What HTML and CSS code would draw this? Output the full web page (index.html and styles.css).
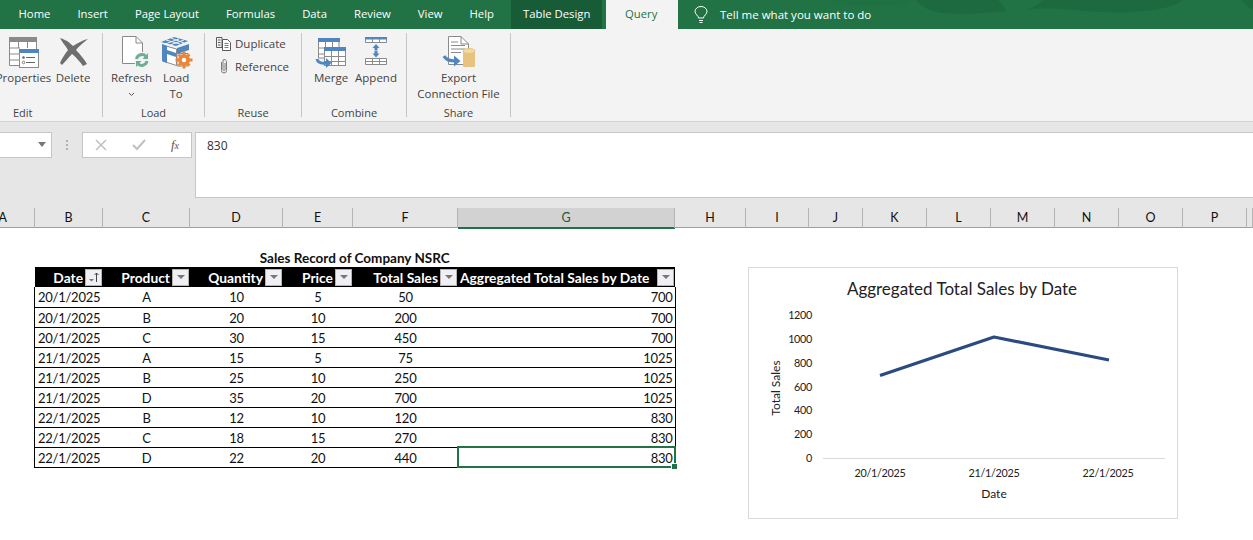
FILE: index.html
```html
<!DOCTYPE html>
<html lang="en">
<head>
    <meta charset="UTF-8">
    <title>Sales Record - Excel</title>
    <link rel="stylesheet" href="styles.css">
</head>
<body>
    <div class="app">
        <div class="tabs">
            <svg class="leaves" width="460" height="29" viewBox="0 0 460 29"><path fill="#1f7043" d="M40 0 C50 6 80 8 115 4 L118 0Z"/><path fill="#1e6a40" d="M123 0 C130 10 145 15 175 14 C190 14 200 11 213 12 C212 6 208 3 205 0Z"/><path fill="#1e6a40" d="M234 10 C260 5 300 15 340 12 C370 10 385 5 390 0 H250 C245 4 240 7 234 10Z"/><path fill="#1e6a40" d="M449 0 H460 V10 C455 8 452 4 449 0Z"/></svg>
            <div class="tab-list">
                <div class="tab">Home</div>
                <div class="tab">Insert</div>
                <div class="tab">Page Layout</div>
                <div class="tab">Formulas</div>
                <div class="tab">Data</div>
                <div class="tab">Review</div>
                <div class="tab">View</div>
                <div class="tab">Help</div>
            </div>
            <div class="tab tab-context">Table Design</div>
            <div class="tab tab-active">Query</div>
            <div class="tell">
                <svg width="14" height="18" viewBox="0 0 14 18" fill="none" stroke="#fff" stroke-width="1"><path d="M4.5 12 C4.5 9.5 1 8.5 1 5.5 A6 5 0 0 1 13 5.5 C13 8.5 9.5 9.5 9.5 12Z"/><path d="M5 14.5H9M5.5 16.5H8.5"/></svg>
                <span>Tell me what you want to do</span>
            </div>
        </div>

        <div class="ribbon">
            <div class="group group-edit">
                <div class="items">
                    <div class="btn">
                        <svg class="icon" width="32" height="32" viewBox="0 0 32 32">
                            <path fill="#fff" stroke="#8a8a8a" d="M1.5 1.5H28.5V29.5H1.5Z"/>
                            <rect x="1" y="1" width="28" height="5" fill="#8a8a8a"/>
                            <path stroke="#8a8a8a" fill="none" d="M1 12H12M1 18H12M1 24H12M10.500 6V12M19.500 6V12"/>
                            <rect x="11.500" y="13.500" width="19" height="18" fill="#fff" stroke="#8a8a8a"/>
                            <rect x="11" y="13" width="20" height="4" fill="#4f86c0"/>
                            <circle cx="15.500" cy="21.500" r="1.300" fill="#666"/>
                            <circle cx="15.500" cy="26.500" r="1.300" fill="none" stroke="#666" stroke-width="0.800"/>
                            <path stroke="#666" d="M18 21.500H27M18 26.500H27"/>
                        </svg>
                        <span class="lbl">Properties</span>
                    </div>
                    <div class="btn">
                        <svg class="icon" width="32" height="32" viewBox="0 0 32 32">
                            <path fill="#6e6e6e" d="M3 2 C6 3 10 4 16 10 C21 7 26 4 31 3 C27 6 22 10 19 14 C23 18 27 23 30 28 L26 30 C23 26 19 21 15 18 C11 22 8 26 5 29 L3 27 C5 22 8 18 11 14 C8 9 5 6 3 2Z"/>
                        </svg>
                        <span class="lbl">Delete</span>
                    </div>
                </div>
                <div class="group-name">Edit</div>
            </div>

            <div class="group group-load">
                <div class="items">
                    <div class="btn">
                        <svg class="icon" width="32" height="32" viewBox="0 0 32 32">
                            <path fill="#fff" stroke="#8a8a8a" d="M6.500 0.500H20L26.500 7V27.500H6.500Z"/>
                            <path fill="none" stroke="#8a8a8a" d="M20 0.500V7H26.500"/>
                            <circle cx="26" cy="24" r="8" fill="#f3f3f3"/>
                            <path fill="none" stroke="#6fae94" stroke-width="3" d="M20.500 23 A5.500 5.500 0 0 1 30 20.500M31 25 A5.500 5.500 0 0 1 21.500 27.500"/>
                            <path fill="#6fae94" d="M32 17V23H26.500ZM20 31V25H25.500Z"/>
                        </svg>
                        <span class="lbl">Refresh</span>
                        <svg class="chev" width="7" height="5" viewBox="0 0 7 5" fill="none" stroke="#555"><path d="M1 1L3.500 3.500L6 1"/></svg>
                    </div>
                    <div class="btn">
                        <svg class="icon" width="32" height="32" viewBox="0 0 32 32">
                            <path fill="#4f86c0" d="M1 6L14 1L28 5L16 10Z"/>
                            <path stroke="#f3f3f3" d="M6 4L20 8M11 2L24 7M5 8L19 3M10 9L24 4"/>
                            <path fill="#fff" stroke="#8a8a8a" d="M2.500 9L16.500 13V29.500L2.500 25Z"/>
                            <path fill="#4f86c0" d="M2 8L7 10V27L2 25ZM7 14V18L16 21V17Z"/>
                            <path fill="#4f86c0" d="M17 12L29 8V14L17 18Z"/>
                            <path fill="#fff" stroke="#8a8a8a" d="M17 17.500H28V30H17Z"/>
                            <g fill="#e8863a">
                                <circle cx="24" cy="24" r="6"/>
                                <path d="M22.500 15.500H25.500V20H22.500ZM22.500 28H25.500V32.500H22.500ZM15.500 22.500H20V25.500H15.500ZM28 22.500H32.500V25.500H28ZM17.500 19.500L19.500 17.500L22 20L20 22ZM26 28L28 26L30.500 28.500L28.500 30.500ZM19.500 30.500L17.500 28.500L20 26L22 28ZM28 22L26 20L28.500 17.500L30.500 19.500Z"/>
                            </g>
                            <circle cx="24" cy="24" r="2.200" fill="#fff"/>
                        </svg>
                        <span class="lbl">Load<br>To</span>
                    </div>
                </div>
                <div class="group-name">Load</div>
            </div>

            <div class="group group-reuse">
                <div class="small-items">
                    <div class="small-btn">
                        <svg width="17" height="15" viewBox="0 0 17 15" fill="none" stroke="#5a5a5a">
                            <path d="M1.500 1.500H7V11.500H1.500ZM3 4H5.500M3 6.500H5.500M3 9H5.500"/>
                            <path fill="#fff" d="M7.500 3.500H12.500L15.500 6.500V14.500H7.500Z"/>
                            <path stroke="#4f86c0" d="M9.500 7.500H13.500M9.500 9.500H13.500M9.500 11.500H13.500"/>
                        </svg>
                        <span>Duplicate</span>
                    </div>
                    <div class="small-btn">
                        <svg width="17" height="17" viewBox="0 0 17 17" fill="none" stroke="#7a7a7a">
                            <path d="M6.500 4V12.500A2.500 2.500 0 0 0 11.500 12.500V3.500A2.200 2.200 0 0 0 8 2V11.500A1 1 0 0 0 10 11.500V5"/>
                        </svg>
                        <span>Reference</span>
                    </div>
                </div>
                <div class="group-name">Reuse</div>
            </div>

            <div class="group group-combine">
                <div class="items">
                    <div class="btn">
                        <svg class="icon" width="32" height="32" viewBox="0 0 32 32">
                            <path fill="#fff" stroke="#8a8a8a" d="M3.500 2.500H24V22H3.500Z"/>
                            <rect x="3" y="2" width="22" height="4" fill="#4f86c0"/>
                            <path stroke="#8a8a8a" fill="none" d="M3 12H10M3 18H10M10.500 6V12M17.500 6V11"/>
                            <rect x="9.500" y="11.500" width="21" height="18" fill="#fff" stroke="#8a8a8a"/>
                            <rect x="9" y="11" width="22" height="4" fill="#4f86c0"/>
                            <path stroke="#8a8a8a" fill="none" d="M10 20.500H30M10 25.500H30M16.500 15V29M23.500 15V29"/>
                            <path fill="none" stroke="#4f86c0" stroke-width="3" d="M2 23 C3 27 6 28 12 27"/>
                            <path fill="#4f86c0" d="M11 22L16.500 27L11 32Z"/>
                        </svg>
                        <span class="lbl">Merge</span>
                    </div>
                    <div class="btn">
                        <svg class="icon" width="32" height="32" viewBox="0 0 32 32">
                            <path fill="#fff" stroke="#8a8a8a" d="M5.500 1.500H26.500V6.500H5.500ZM5.500 22.500H26.500V28.500H5.500Z"/>
                            <rect x="5" y="1" width="22" height="2.500" fill="#4f86c0"/>
                            <path stroke="#8a8a8a" d="M12.500 3V7M19.500 3V7M5 25.500H27M12.500 23V28M19.500 23V28"/>
                            <path fill="#4f86c0" d="M16 8L19.500 12H17.500V14.500H14.500V12H12.500ZM16 21.500L12.500 17.500H14.500V15H17.500V17.500H19.500Z"/>
                        </svg>
                        <span class="lbl">Append</span>
                    </div>
                </div>
                <div class="group-name">Combine</div>
            </div>

            <div class="group group-share">
                <div class="items">
                    <div class="btn">
                        <svg class="icon" width="32" height="32" viewBox="0 0 32 32">
                            <path fill="#fff" stroke="#8a8a8a" d="M5.500 0.500H18L25.500 8V28.500H5.500Z"/>
                            <path fill="none" stroke="#8a8a8a" d="M18 0.500V8H25.500M8 6H15M8 9.500H22M8 13H22M8 16.500H18"/>
                            <rect x="20" y="14" width="12" height="17" rx="1" fill="#e8c37f"/>
                            <ellipse cx="26" cy="15" rx="6" ry="2.500" fill="#f1d9a8" stroke="#e8c37f"/>
                            <path fill="none" stroke="#4f86c0" stroke-width="3.200" d="M1 20 C3 24 7 25 12 25"/>
                            <path fill="#4f86c0" d="M11 19.500L17.500 25L11 30.500Z"/>
                        </svg>
                        <span class="lbl">Export<br>Connection File</span>
                    </div>
                </div>
                <div class="group-name">Share</div>
            </div>
        </div>

        <div class="formula-bar">
            <div class="name-box"><span class="caret"></span></div>
            <div class="grip"></div>
            <div class="fx-buttons">
                <svg width="12" height="12" viewBox="0 0 12 12" stroke="#c0c0c0" stroke-width="1.500"><path d="M1 1L11 11M11 1L1 11"/></svg>
                <svg width="14" height="12" viewBox="0 0 14 12" fill="none" stroke="#c0c0c0" stroke-width="2"><path d="M1 6L5 10L13 1"/></svg>
                <span class="fx">f<small>x</small></span>
            </div>
            <div class="formula-input">830</div>
        </div>

        <div class="col-heads">
            <div class="ch ch-a">A</div>
            <div class="ch">B</div>
            <div class="ch">C</div>
            <div class="ch">D</div>
            <div class="ch">E</div>
            <div class="ch">F</div>
            <div class="ch ch-sel">G</div>
            <div class="ch">H</div>
            <div class="ch">I</div>
            <div class="ch">J</div>
            <div class="ch">K</div>
            <div class="ch">L</div>
            <div class="ch">M</div>
            <div class="ch">N</div>
            <div class="ch">O</div>
            <div class="ch">P</div>
            <div class="ch"></div>
        </div>

        <div class="sheet">
            <table class="sales">
                <caption>Sales Record of Company NSRC</caption>
                <colgroup>
                    <col class="c-date"><col class="c-prod"><col class="c-qty"><col class="c-price"><col class="c-total"><col class="c-agg">
                </colgroup>
                <thead>
                    <tr>
                        <th><div class="th-in"><span>Date</span><span class="filter sorted"><svg width="13" height="13" viewBox="0 0 13 13"><path fill="#777" d="M2 8H7L4.500 10.500Z"/><path fill="none" stroke="#444" d="M9.500 11V2M7.500 4L9.500 2L11.500 4"/></svg></span></div></th>
                        <th><div class="th-in"><span>Product</span><span class="filter"><i></i></span></div></th>
                        <th><div class="th-in"><span>Quantity</span><span class="filter"><i></i></span></div></th>
                        <th><div class="th-in"><span>Price</span><span class="filter"><i></i></span></div></th>
                        <th><div class="th-in"><span>Total Sales</span><span class="filter"><i></i></span></div></th>
                        <th><div class="th-in th-wide"><span>Aggregated Total Sales by Date</span><span class="filter"><i></i></span></div></th>
                    </tr>
                </thead>
                <tbody>
                    <tr><td class="left">20/1/2025</td><td>A</td><td>10</td><td>5</td><td>50</td><td class="right">700</td></tr>
                    <tr><td class="left">20/1/2025</td><td>B</td><td>20</td><td>10</td><td>200</td><td class="right">700</td></tr>
                    <tr><td class="left">20/1/2025</td><td>C</td><td>30</td><td>15</td><td>450</td><td class="right">700</td></tr>
                    <tr><td class="left">21/1/2025</td><td>A</td><td>15</td><td>5</td><td>75</td><td class="right">1025</td></tr>
                    <tr><td class="left">21/1/2025</td><td>B</td><td>25</td><td>10</td><td>250</td><td class="right">1025</td></tr>
                    <tr><td class="left">21/1/2025</td><td>D</td><td>35</td><td>20</td><td>700</td><td class="right">1025</td></tr>
                    <tr><td class="left">22/1/2025</td><td>B</td><td>12</td><td>10</td><td>120</td><td class="right">830</td></tr>
                    <tr><td class="left">22/1/2025</td><td>C</td><td>18</td><td>15</td><td>270</td><td class="right">830</td></tr>
                    <tr><td class="left">22/1/2025</td><td>D</td><td>22</td><td>20</td><td>440</td><td class="right selected">830<span class="handle"></span></td></tr>
                </tbody>
            </table>

            <div class="chart">
                <svg width="430" height="252" viewBox="0 0 430 252">
                    <text class="chart-title" x="214" y="28" text-anchor="middle">Aggregated Total Sales by Date</text>
                    <g class="chart-text" text-anchor="end">
                        <text x="64" y="52">1200</text>
                        <text x="64" y="76">1000</text>
                        <text x="64" y="100">800</text>
                        <text x="64" y="124">600</text>
                        <text x="64" y="147">400</text>
                        <text x="64" y="171">200</text>
                        <text x="64" y="195">0</text>
                    </g>
                    <path d="M75 191.500H417" stroke="#d9d9d9" fill="none"/>
                    <path d="M132 108.500L246 70L361 93" fill="none" stroke="#2a4a80" stroke-width="3.200" stroke-linejoin="round"/>
                    <g class="chart-text" text-anchor="middle">
                        <text x="132" y="210">20/1/2025</text>
                        <text x="246" y="210">21/1/2025</text>
                        <text x="360" y="210">22/1/2025</text>
                    </g>
                    <g class="chart-axis" text-anchor="middle">
                        <text x="246" y="231">Date</text>
                        <text transform="translate(32 121) rotate(-90)">Total Sales</text>
                    </g>
                </svg>
            </div>
        </div>
    </div>
</body>
</html>
```

FILE: styles.css
```css
*{
    margin: 0;
    padding: 0;
    box-sizing: border-box;
}
html,body{
    background-color: #fff;
}
.app{
    width: 1253px;
    height: 540px;
    overflow: hidden;
    font-family: "Open Sans", "Liberation Sans", sans-serif;
}

/* tabs */
.tabs{
    height: 29px;
    background-color: #217346;
    display: flex;
    padding-left: 5px;
    position: relative;
    color: #fff;
    font-size: 11.300px;
}
.leaves{
    position: absolute;
    left: 793px;
    top: 0;
}
.tab-list{
    width: 506px;
    flex: none;
    display: flex;
}
.tab{
    padding: 0 13.500px;
    line-height: 28px;
    position: relative;
    flex: none;
    white-space: nowrap;
}
.tab-context{
    background-color: #185c37;
    padding: 0 12px;
    width: 91px;
    margin-right: 4px;
}
.tab-active{
    background-color: #f3f3f3;
    color: #217346;
    width: 72px;
    padding: 0 0 0 19px;
}
.tell{
    display: flex;
    align-items: center;
    gap: 12px;
    margin-left: 16px;
    font-size: 11.500px;
    position: relative;
}

/* ribbon */
.ribbon{
    height: 93px;
    background-color: #f3f3f3;
    display: flex;
    padding-top: 4px;
    color: #444;
    font-size: 11.500px;
    border-bottom: 1px solid #d4d4d4;
}
.group{
    height: 84px;
    border-right: 1px solid #c6c6c6;
    display: flex;
    flex-direction: column;
    flex: none;
}
.group-edit{ width: 103px; }
.group-load{ width: 102px; }
.group-reuse{ width: 97px; }
.group-combine{ width: 105px; }
.group-share{ width: 104px; }
.items{
    height: 72px;
    flex: none;
    display: flex;
    justify-content: center;
}
.group-edit .items{
    justify-content: flex-end;
    padding-right: 9px;
    gap: 6px;
}
.group-load .items{ gap: 4px; }
.group-combine .items{ gap: 4px; }
.btn{
    display: flex;
    flex-direction: column;
    align-items: center;
    text-align: center;
    line-height: 16px;
    white-space: nowrap;
    min-width: 40px;
}
.icon{
    margin-top: 3px;
    margin-bottom: 2px;
    overflow: visible;
    flex: none;
}
.chev{
    margin-top: 6px;
}
.group-name{
    text-align: center;
    height: 16px;
    line-height: 16px;
    font-size: 11px;
}
.group-edit .group-name{
    text-align: left;
    padding-left: 13px;
}
.small-items{
    height: 72px;
    flex: none;
    padding: 1px 0 0 10px;
    display: flex;
    flex-direction: column;
    gap: 5px;
}
.small-btn{
    display: flex;
    align-items: center;
    gap: 3px;
    height: 18px;
}

/* formula bar */
.formula-bar{
    height: 86px;
    background-color: #e6e6e6;
    display: flex;
    align-items: flex-start;
    padding-top: 10px;
}
.name-box{
    width: 52px;
    height: 26px;
    background-color: #fff;
    border: 1px solid #c6c6c6;
    border-left: none;
    position: relative;
}
.caret{
    position: absolute;
    right: 5px;
    top: 9px;
    border-left: 4px solid transparent;
    border-right: 4px solid transparent;
    border-top: 5px solid #777;
}
.grip{
    width: 2px;
    height: 10px;
    margin: 8px 14px 0 14px;
    border-left: 2px dotted #b0b0b0;
}
.fx-buttons{
    width: 110px;
    height: 26px;
    background-color: #fff;
    border: 1px solid #c6c6c6;
    display: flex;
    align-items: center;
    justify-content: space-between;
    padding: 0 12px 0 12px;
    margin-right: 3px;
}
.fx{
    font: italic 13px "Liberation Serif", serif;
    color: #555;
}
.fx small{
    font-size: 10px;
}
.formula-input{
    flex: 1;
    height: 66px;
    background-color: #fff;
    border: 1px solid #c6c6c6;
    border-right: none;
    padding: 4px 11px;
    font-size: 12px;
    line-height: 17px;
    color: #333;
}

/* column headers */
.col-heads{
    height: 20px;
    background-color: #e6e6e6;
    border-bottom: 1px solid #9f9f9f;
    display: grid;
    grid-template-columns: 34.500px 68px 87px 93px 70px 105px 217px 71px 63px 54px 64px 64px 64px 64px 64px 64px 1fr;
    font: 12.500px "Lato", "Liberation Sans", sans-serif;
    color: #111;
}
.ch{
    text-align: center;
    line-height: 19px;
    padding-left: 1px;
    border-right: 1px solid #b4b4b4;
}
.ch-a{
    text-indent: -29px;
}
.ch-sel{
    background-color: #d2d2d2;
    color: #185c37;
    border-bottom: 2px solid #217346;
    margin-bottom: -1px;
}

/* sheet and table */
.sheet{
    position: relative;
    height: 312px;
    padding: 20px 0 0 34px;
    font: 13px "Lato", "Liberation Sans", sans-serif;
    color: #111;
}
.sales{
    border-collapse: collapse;
    table-layout: fixed;
    width: 641px;
}
.sales caption{
    height: 19px;
    line-height: 20px;
    font-size: 13.500px;
    font-weight: bold;
}
.c-date{ width: 68.500px; }
.c-prod{ width: 87px; }
.c-qty{ width: 93px; }
.c-price{ width: 70px; }
.c-total{ width: 105px; }
.c-agg{ width: 217px; }
.sales th{
    height: 20px;
    background-color: #000;
    color: #fff;
    font-size: 13.800px;
    font-weight: bold;
    padding: 0;
}
.th-in{
    display: flex;
    justify-content: flex-end;
    align-items: center;
    gap: 2px;
    padding-right: 1px;
    height: 20px;
}
.th-wide{
    justify-content: space-between;
    padding-left: 2px;
}
.filter{
    width: 17px;
    height: 17px;
    background-color: #f0f0f4;
    border: 1px solid #b4b4b4;
    display: flex;
    align-items: center;
    justify-content: center;
}
.filter i{
    border-left: 4px solid transparent;
    border-right: 4px solid transparent;
    border-top: 4px solid #777;
}
.sales td{
    height: 20px;
    text-align: center;
    padding: 1px 2px 0;
    letter-spacing: -0.250px;
    border-bottom: 1px solid #000;
}
.sales td.left{
    text-align: left;
    padding-left: 3px;
    border-left: 1px solid #000;
}
.sales td.right{
    text-align: right;
    border-right: 1px solid #000;
}
.sales td.selected{
    position: relative;
    outline: 2px solid #217346;
    outline-offset: -1px;
}
.handle{
    position: absolute;
    right: -2px;
    bottom: -2px;
    width: 5px;
    height: 5px;
    background-color: #217346;
    outline: 1px solid #fff;
}

/* chart over the sheet */
.chart{
    position: absolute;
    left: 748px;
    top: 39px;
    width: 430px;
    height: 252px;
    background-color: #fff;
    border: 1px solid #d9d9d9;
}
.chart svg{
    display: block;
    margin: -1px;
}
.chart-title{
    font: 17px "Lato", "Liberation Sans", sans-serif;
    fill: #222;
}
.chart-text{
    font: 10.800px "Lato", "Liberation Sans", sans-serif;
    letter-spacing: -0.300px;
    fill: #222;
}
.chart-axis{
    font: 12px "Lato", "Liberation Sans", sans-serif;
    fill: #222;
}
```
